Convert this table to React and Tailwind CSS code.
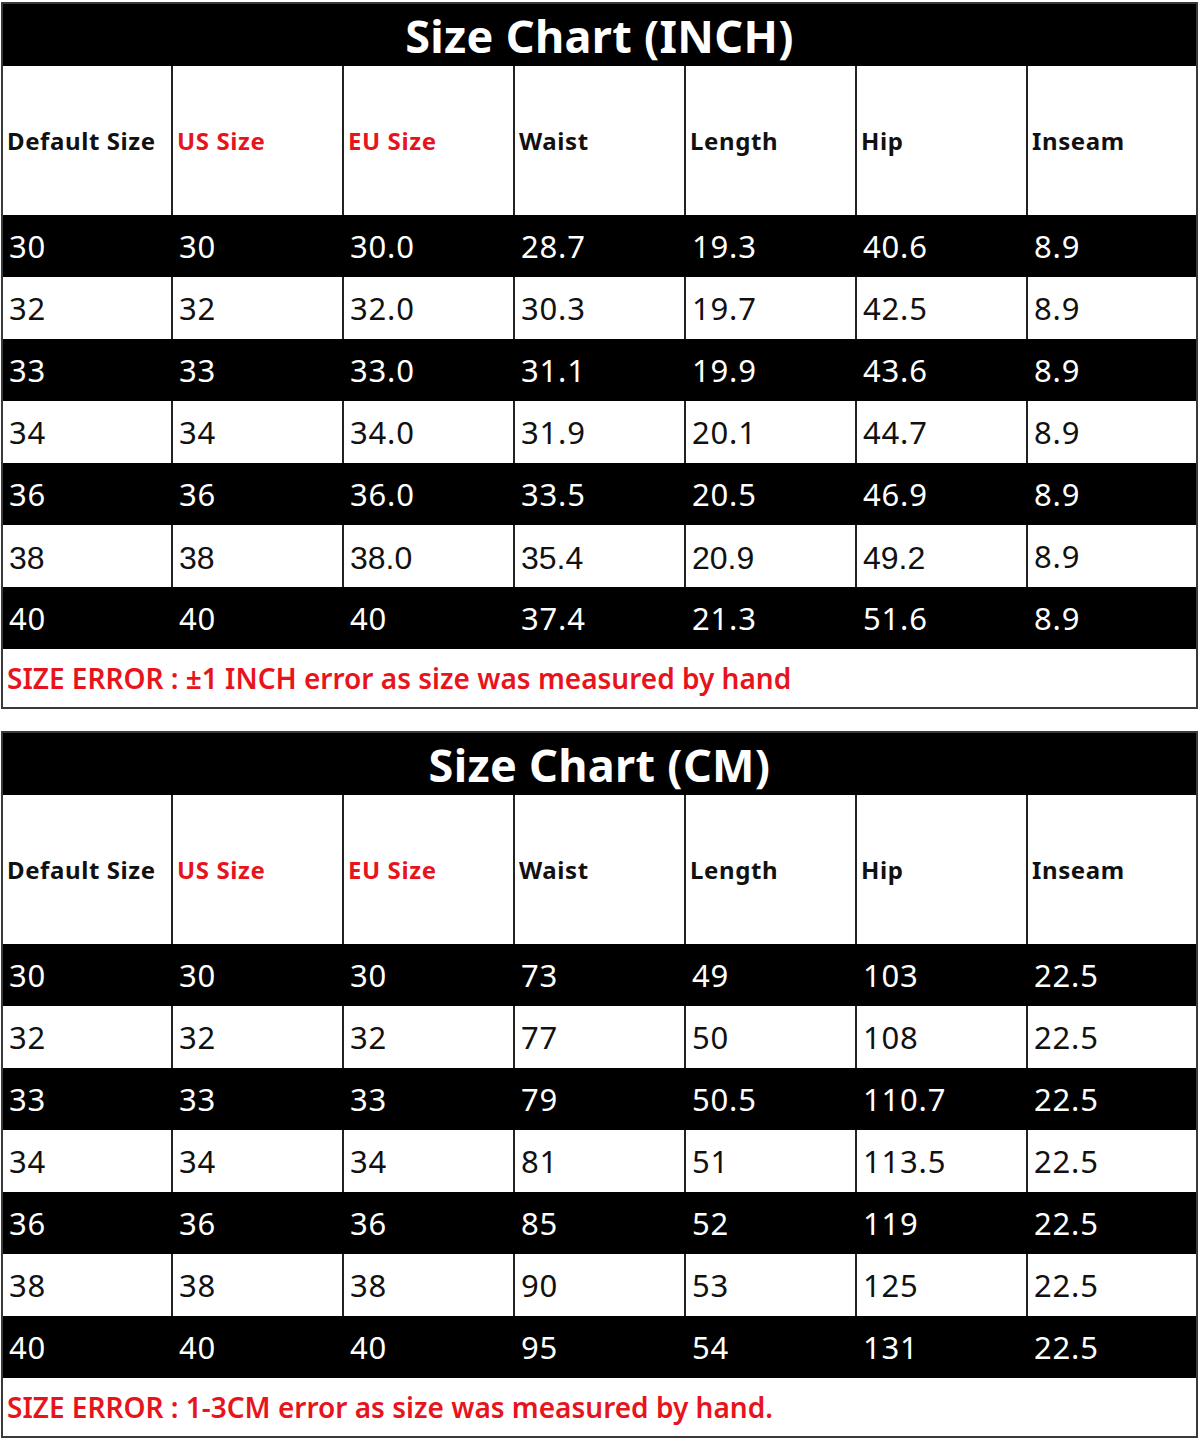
import React from 'react';

const headers = [
    { label: "Default Size", red: false },
    { label: "US Size", red: true },
    { label: "EU Size", red: true },
    { label: "Waist", red: false },
    { label: "Length", red: false },
    { label: "Hip", red: false },
    { label: "Inseam", red: false },
];

const inchRows = [
    ["30", "30", "30.0", "28.7", "19.3", "40.6", "8.9"],
    ["32", "32", "32.0", "30.3", "19.7", "42.5", "8.9"],
    ["33", "33", "33.0", "31.1", "19.9", "43.6", "8.9"],
    ["34", "34", "34.0", "31.9", "20.1", "44.7", "8.9"],
    ["36", "36", "36.0", "33.5", "20.5", "46.9", "8.9"],
    ["38", "38", "38.0", "35.4", "20.9", "49.2", "8.9"],
    ["40", "40", "40", "37.4", "21.3", "51.6", "8.9"],
];

const cmRows = [
    ["30", "30", "30", "73", "49", "103", "22.5"],
    ["32", "32", "32", "77", "50", "108", "22.5"],
    ["33", "33", "33", "79", "50.5", "110.7", "22.5"],
    ["34", "34", "34", "81", "51", "113.5", "22.5"],
    ["36", "36", "36", "85", "52", "119", "22.5"],
    ["38", "38", "38", "90", "53", "125", "22.5"],
    ["40", "40", "40", "95", "54", "131", "22.5"],
];

// colonnes alignées sur les traits de la capture (172, 343, 514...)
const cols = "grid grid-cols-[168px_171px_171px_171px_171px_171px_1fr]";

const SizeTable = ({ title, rows, note, oddRow }) => {
    return (
        <div className="ml-[1px] w-[1197px] border-2 border-[#3a3a3a] bg-white">
            {/* Titre */}
            <div className="h-[62px] bg-black flex items-center justify-center">
                <span className="text-white text-[45px] font-bold leading-none tracking-[0.3px]">{title}</span>
            </div>

            {/* En-têtes */}
            <div className={`${cols} h-[149px]`}>
                {headers.map((h, i) => (
                    <div
                        key={h.label}
                        className={`flex items-center pl-[4px] text-[24px] font-bold tracking-[0.6px] ${i > 0 ? 'border-l-2 border-[#222]' : ''} ${h.red ? 'text-[#e8141c]' : 'text-[#111]'}`}
                    >
                        {h.label}
                    </div>
                ))}
            </div>

            {/* Lignes */}
            {rows.map((row, r) => {
                const dark = r % 2 === 0;
                return (
                    <div key={r} className={`${cols} h-[62px] ${dark ? 'bg-black text-white' : 'bg-white text-[#111]'}`}>
                        {row.map((v, c) => (
                            <div
                                key={c}
                                className={`flex items-center pl-[6px] text-[31px] tracking-[0.8px] ${c > 0 ? (dark ? 'border-l-2 border-black' : 'border-l-2 border-[#222]') : ''} ${oddRow === r && c < 6 ? "font-['Liberation_Sans'] font-normal text-[32px] tracking-normal pt-[4px]" : ''}`}
                            >
                                {v}
                            </div>
                        ))}
                    </div>
                );
            })}

            {/* Note */}
            <div className="h-[58px] flex items-center pl-[4px] text-[#e8141c] text-[28px] font-semibold">
                {note}
            </div>
        </div>
    );
};

export default function App() {
    return (
        <div className="w-[1200px] h-[1444px] bg-white pt-[2px] font-['Noto_Sans','Open_Sans',sans-serif]">
            <SizeTable
                title="Size Chart (INCH)"
                rows={inchRows}
                note="SIZE ERROR : ±1 INCH error as size was measured by hand"
                oddRow={5}
            />
            <div className="h-[22px]" />
            <SizeTable
                title="Size Chart (CM)"
                rows={cmRows}
                note="SIZE ERROR : 1-3CM error as size was measured by hand."
            />
        </div>
    );
}
